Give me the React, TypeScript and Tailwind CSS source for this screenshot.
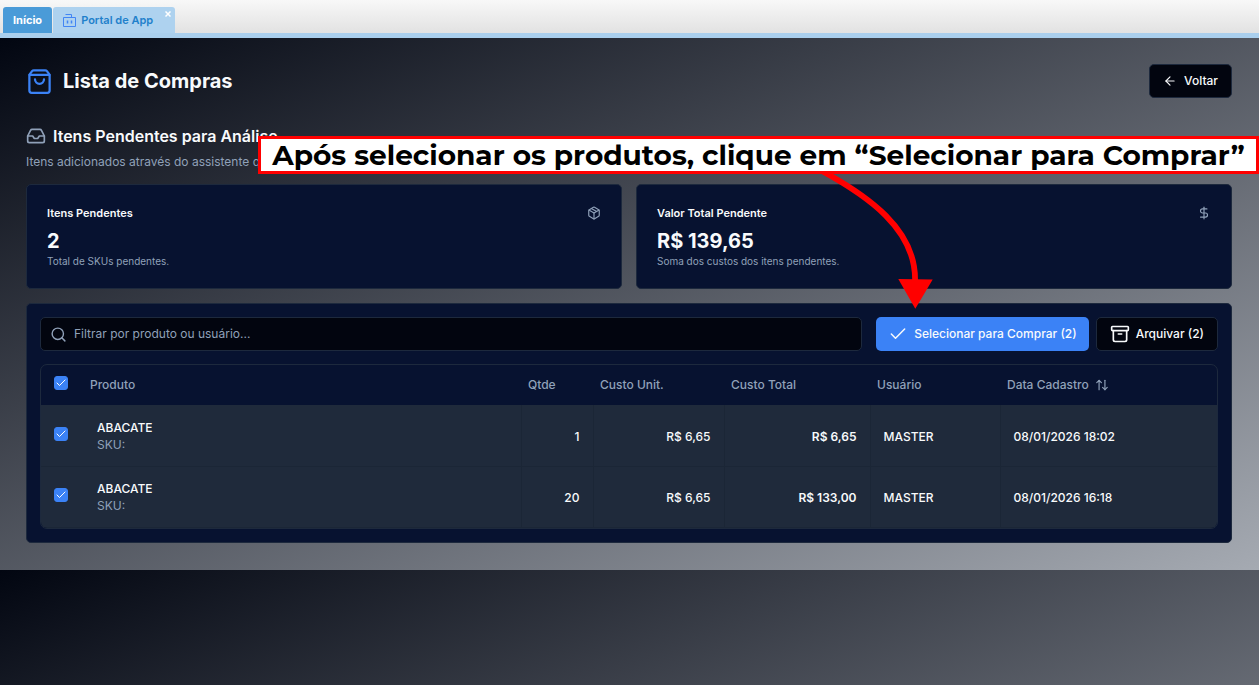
import React, { useState } from 'react';
import {
  Archive,
  ArrowLeft,
  ArrowUpDown,
  Check,
  DollarSign,
  Inbox,
  Package,
  Search,
  ShoppingBag,
} from 'lucide-react';

type Item = {
  id: number;
  produto: string;
  qtde: number;
  custo: number;
  usuario: string;
  data: string;
};

const items: Item[] = [
  { id: 1, produto: 'ABACATE', qtde: 1, custo: 6.65, usuario: 'MASTER', data: '08/01/2026 18:02' },
  { id: 2, produto: 'ABACATE', qtde: 20, custo: 6.65, usuario: 'MASTER', data: '08/01/2026 16:18' },
];

const money = (value: number) => `R$ ${value.toFixed(2).replace('.', ',')}`;

const App = () => {
  const [selected, setSelected] = useState<number[]>([1, 2]);
  const [filter, setFilter] = useState('');

  const visible = items.filter((item) =>
    `${item.produto} ${item.usuario}`.toLowerCase().includes(filter.toLowerCase())
  );
  const total = items.reduce((sum, item) => sum + item.qtde * item.custo, 0);
  const allSelected = selected.length === items.length;

  const toggle = (id: number) => {
    setSelected((prev) => (prev.includes(id) ? prev.filter((x) => x !== id) : [...prev, id]));
  };

  return (
    <div className="relative flex min-h-screen flex-col overflow-hidden font-[Inter,sans-serif] text-[12px] text-slate-50">
      <TabBar />
      <main className="flex-1 bg-[linear-gradient(to_bottom_right,#020611,#a5aab2)] bg-[length:100%_532px] pt-[26px] pr-[27px] pb-[26px] pl-[26px]">
        <header className="flex items-center justify-between">
          <div className="flex items-center gap-[10px]">
            <ShoppingBag className="size-[27px] text-[#3b82f6]" />
            <h1 className="text-[20px] font-bold">Lista de Compras</h1>
          </div>
          <button className="flex h-[34px] items-center gap-[7px] rounded-[5px] border border-slate-800 bg-[#02050f] px-[13px] font-medium">
            <ArrowLeft className="size-[14px]" />
            Voltar
          </button>
        </header>

        <section className="mt-[26px]">
          <h2 className="flex items-center gap-[7px] text-[16px] leading-6 font-semibold">
            <Inbox className="size-5 text-slate-400" />
            Itens Pendentes para Análise
          </h2>
          <p className="mt-1 leading-5 text-slate-400">Itens adicionados através do assistente que</p>

          <div className="mt-3 grid grid-cols-2 gap-[14px]">
            <StatCard
              title="Itens Pendentes"
              value={String(items.length)}
              note="Total de SKUs pendentes."
              icon={<Package className="size-[14px] text-slate-400" />}
            />
            <StatCard
              title="Valor Total Pendente"
              value={money(total)}
              note="Soma dos custos dos itens pendentes."
              icon={<DollarSign className="size-[14px] text-slate-400" />}
            />
          </div>

          <div className="mt-[14px] rounded-[5px] border border-slate-800 bg-[#071230] p-[13px]">
            <div className="flex gap-[7px]">
              <label className="mr-[7px] flex h-[34px] flex-1 items-center gap-[7px] rounded-[5px] border border-slate-800 bg-[#02050f] px-[9px]">
                <Search className="size-[17px] text-slate-400" />
                <input
                  type="text"
                  aria-label="Filtrar por produto ou usuário"
                  placeholder="Filtrar por produto ou usuário..."
                  value={filter}
                  onChange={(e) => setFilter(e.target.value)}
                  className="flex-1 bg-transparent outline-none placeholder:text-slate-400"
                />
              </label>
              <button className="flex h-[34px] items-center gap-[6px] rounded-[5px] bg-[#3b82f6] px-[12px] font-medium">
                <Check className="size-5" strokeWidth={1.8} />
                Selecionar para Comprar ({selected.length})
              </button>
              <button className="flex h-[34px] items-center gap-[6px] rounded-[5px] border border-slate-800 bg-[#02050f] px-[13px] font-medium">
                <Archive className="size-5" />
                Arquivar ({selected.length})
              </button>
            </div>

            <div className="mt-[13px] overflow-hidden rounded-[7px] border border-slate-800">
              <table className="w-full table-fixed border-collapse">
                <colgroup>
                  <col className="w-[42px]" />
                  <col />
                  <col className="w-[72px]" />
                  <col className="w-[131px]" />
                  <col className="w-[146px]" />
                  <col className="w-[130px]" />
                  <col className="w-[217px]" />
                </colgroup>
                <thead>
                  <tr className="h-10 text-left text-slate-400">
                    <th className="pb-1 pl-[13px]">
                      <Checkbox
                        label="Selecionar todos"
                        checked={allSelected}
                        onChange={() => setSelected(allSelected ? [] : items.map((i) => i.id))}
                      />
                    </th>
                    <th className="px-[7px] font-medium">Produto</th>
                    <th className="px-[7px] font-medium">Qtde</th>
                    <th className="px-[7px] font-medium">Custo Unit.</th>
                    <th className="px-[7px] font-medium">Custo Total</th>
                    <th className="px-[7px] font-medium">Usuário</th>
                    <th className="px-[7px] font-medium">
                      <button className="flex items-center gap-[6px]">
                        Data Cadastro
                        <ArrowUpDown className="size-[14px]" />
                      </button>
                    </th>
                  </tr>
                </thead>
                <tbody>
                  {visible.map((item) => (
                    <tr
                      key={item.id}
                      className={`h-[61px] border-b border-[#1b2636] font-medium ${
                        selected.includes(item.id) ? 'bg-[#1f2a3b]' : ''
                      }`}
                    >
                      <td className="pb-[3px] pl-[13px]">
                        <Checkbox
                          label={`Selecionar item ${item.id}`}
                          checked={selected.includes(item.id)}
                          onChange={() => toggle(item.id)}
                        />
                      </td>
                      <td className="px-[14px] pt-px leading-[17px]">
                        <div>{item.produto}</div>
                        <div className="font-normal text-slate-400">SKU:</div>
                      </td>
                      <td className="border-l border-[#1b2636] px-[13px] pt-[3px] text-right">{item.qtde}</td>
                      <td className="border-l border-[#1b2636] px-[13px] pt-[3px] text-right">{money(item.custo)}</td>
                      <td className="border-l border-[#1b2636] px-[13px] pt-[3px] text-right font-semibold">
                        {money(item.qtde * item.custo)}
                      </td>
                      <td className="border-l border-[#1b2636] px-[13px] pt-[3px]">{item.usuario}</td>
                      <td className="border-l border-[#1b2636] px-[13px] pt-[3px]">{item.data}</td>
                    </tr>
                  ))}
                </tbody>
              </table>
            </div>
          </div>
        </section>
      </main>
      <Callout />
    </div>
  );
};

const TabBar = () => (
  <nav className="flex h-[38px] items-end gap-px border-b-[5px] border-[#aacfed] bg-linear-to-b from-[#f8f8f8] to-[#e2e2e2] pl-[3px] text-[11px] font-bold">
    <a href="#inicio" className="flex h-[26px] items-center rounded-t-[3px] bg-[#4a9bd8] px-[10px] text-white">
      Início
    </a>
    <div className="relative flex h-[26px] items-center rounded-t-[3px] bg-[#aed2ef] pr-[22px] pl-[10px]">
      <a href="#portal" className="flex items-center gap-[5px] font-semibold text-[#1f80cb]">
        <svg className="h-[14px] w-[13px]" viewBox="0 0 13 14" fill="none" stroke="#4285f4">
          <path d="M.5 4.500h12v9H.5zM2.500 1.500h6v3" />
          <path d="M4.500 7.500v3M8.500 7.500v3" strokeWidth="1.500" />
        </svg>
        Portal de App
      </a>
      <button aria-label="Fechar" className="absolute top-1 right-1">
        <svg className="size-[6px]" viewBox="0 0 6 6" stroke="white" strokeWidth="1.500">
          <path d="M.5.5l5 5M5.500.5l-5 5" />
        </svg>
      </button>
    </div>
  </nav>
);

type StatCardProps = {
  title: string;
  value: string;
  note: string;
  icon: React.ReactNode;
};

const StatCard = ({ title, value, note, icon }: StatCardProps) => (
  <div className="rounded-[5px] border border-slate-800 bg-[#071230] p-5">
    <div className="flex items-center justify-between">
      <h3 className="text-[11px] leading-4 font-semibold">{title}</h3>
      {icon}
    </div>
    <div className="mt-[6px] text-[20px] leading-7 font-bold">{value}</div>
    <p className="text-[10px] leading-[13px] text-slate-400">{note}</p>
  </div>
);

type CheckboxProps = {
  label: string;
  checked: boolean;
  onChange: () => void;
};

const Checkbox = ({ label, checked, onChange }: CheckboxProps) => (
  <label className="grid size-[14px] place-items-center">
    <input
      type="checkbox"
      aria-label={label}
      checked={checked}
      onChange={onChange}
      className="col-start-1 row-start-1 size-[14px] appearance-none rounded-[3px] border border-[#3b82f6] checked:bg-[#3b82f6]"
    />
    {checked && <Check className="pointer-events-none col-start-1 row-start-1 size-3 text-white" />}
  </label>
);

// Instruction banner with the arrow that points at the buy button
const Callout = () => (
  <div className="pointer-events-none absolute top-[136px] right-0 w-[1001px]">
    <svg className="absolute top-[36px] right-[319px] h-[140px] w-[120px]" viewBox="820 172 120 140">
      <path d="M822 171C866 195 917 229 915 282" fill="none" stroke="#ff0000" strokeWidth="5.800" />
      <path d="M898.300 279L932.700 279.500L915.300 308.700Z" fill="#ff0000" />
    </svg>
    <p className="relative border-[3px] border-[#ff0000] bg-white text-center font-[Montserrat,Inter,sans-serif] text-[28px] leading-8 font-bold whitespace-nowrap text-black">
      Após selecionar os produtos, clique em “Selecionar para Comprar”
    </p>
  </div>
);

export default App;
